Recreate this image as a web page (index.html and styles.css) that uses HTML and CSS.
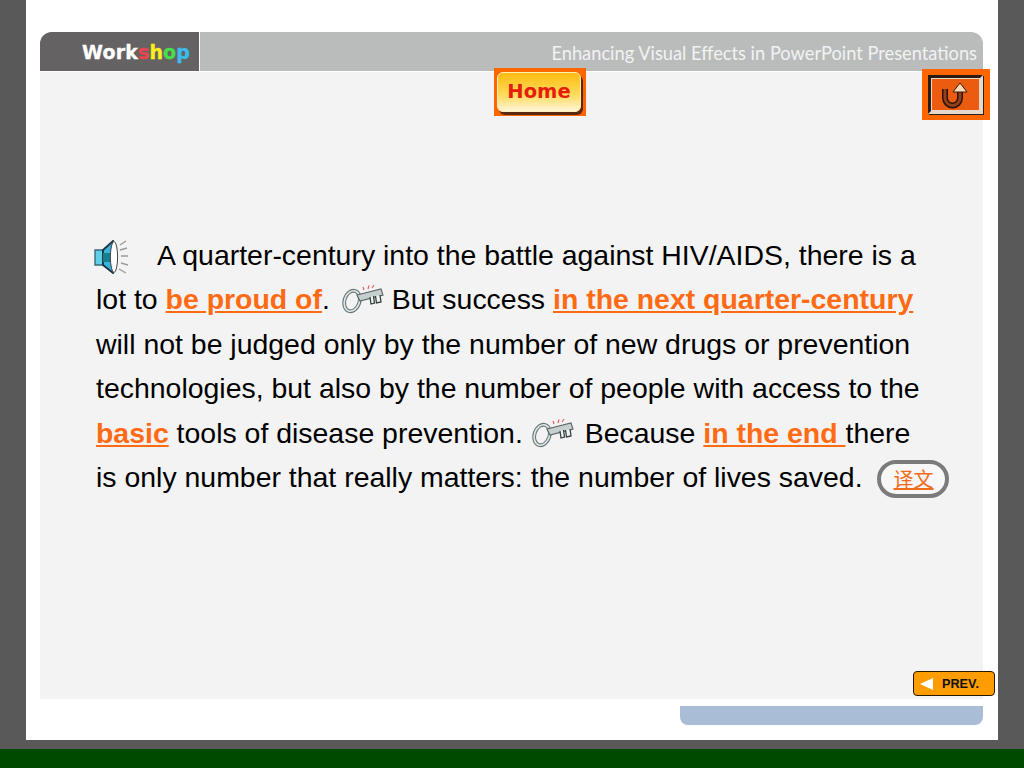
FILE: index.html
```html
<!DOCTYPE html>
<html lang="en">
<head>
<meta charset="utf-8">
<title>Workshop</title>
<link rel="stylesheet" href="styles.css">
</head>
<body>
<div class="slide">
  <header class="head">
    <div class="brand"><span class="brand-name">Work<span class="c-s">s</span><span class="c-h">h</span><span class="c-o">o</span><span class="c-p">p</span></span></div>
    <div class="title">Enhancing Visual Effects in PowerPoint Presentations</div>
  </header>
  <main class="content">
    <p class="para"><span class="first"><svg class="speaker" viewBox="0 0 34 34" width="34" height="34"><path d="M1 10h8v15H1z" fill="#62cfe6" stroke="#3a6a78" stroke-width="1.4"/><path d="M9 10 L19 1 V33 L9 25z" fill="#39b4de" stroke="#1c3440" stroke-width="1.8"/><path d="M9 13h7v9H9z" fill="#17808f"/><ellipse cx="20" cy="17" rx="3.6" ry="15.5" fill="#fff" stroke="#444" stroke-width="1"/><path d="M26 5 L32 1 M26 10 L33 8 M27 16 L34 16 M27 23 L34 25 M25 29 L32 33" stroke="#9a9a9a" stroke-width="1.4" fill="none"/></svg>A quarter-century into the battle against HIV/AIDS, there is a</span><br>
    lot to <a class="key" href="#">be proud of</a>.<svg class="keyicon keyicon-a" viewBox="0 0 42 32" width="42" height="32"><ellipse cx="10" cy="17" rx="7.5" ry="10.5" transform="rotate(18 10 17)" fill="none" stroke="#68767a" stroke-width="3.8"/><ellipse cx="10" cy="17" rx="7.5" ry="10.5" transform="rotate(18 10 17)" fill="none" stroke="#e3e9e9" stroke-width="1.6"/><path d="M15 11 L39 5 L41 11 L18 17z" fill="#c6cfcf" stroke="#5a6666" stroke-width="1.1"/><path d="M28 13l1 7 3.5-1-1-7M33.5 12l1 7 4.5-1-1-7" fill="#eef2f2" stroke="#37413f" stroke-width="1.3"/><path d="M22 6l-1-3M26 5l1-3.5M30 4l2-3" stroke="#e0606a" stroke-width="1.2"/></svg> But success <a class="key" href="#">in the next quarter-century</a><br>
    will not be judged only by the number of new drugs or prevention<br>
    technologies, but also by the number of people with access to the<br>
    <a class="key" href="#">basic</a> tools of disease prevention.<svg class="keyicon keyicon-b" viewBox="0 0 42 32" width="42" height="32"><ellipse cx="10" cy="17" rx="7.5" ry="10.5" transform="rotate(18 10 17)" fill="none" stroke="#68767a" stroke-width="3.8"/><ellipse cx="10" cy="17" rx="7.5" ry="10.5" transform="rotate(18 10 17)" fill="none" stroke="#e3e9e9" stroke-width="1.6"/><path d="M15 11 L39 5 L41 11 L18 17z" fill="#c6cfcf" stroke="#5a6666" stroke-width="1.1"/><path d="M28 13l1 7 3.5-1-1-7M33.5 12l1 7 4.5-1-1-7" fill="#eef2f2" stroke="#37413f" stroke-width="1.3"/><path d="M22 6l-1-3M26 5l1-3.5M30 4l2-3" stroke="#e0606a" stroke-width="1.2"/></svg> Because <a class="key" href="#">in the end </a>there<br>
    is only number that really matters: the number of lives saved. <a class="pill" href="#">译文</a></p>
  </main>
  <div class="foot"><div class="foot-bar"></div></div>
  <a class="home" href="#"><span class="home-face">Home</span></a>
  <a class="back" href="#"><span class="back-face"><svg viewBox="0 0 28 28" width="28" height="28"><path d="M5 8v9a7.5 7.5 0 0 0 15 0v-6" fill="none" stroke="#2a1208" stroke-width="6"/><path d="M5 8v9a7.5 7.5 0 0 0 15 0v-6" fill="none" stroke="#94401c" stroke-width="3"/><path d="M13 11l7-9 7 9z" fill="#ffdcbc" stroke="#3a1a0a" stroke-width="1"/></svg></span></a>
  <a class="prev" href="#"><span class="tri"></span>PREV.</a>
</div>
<div class="ground"></div>
</body>
</html>
```
FILE: styles.css
```css
* { box-sizing: border-box; }
html, body { margin: 0; height: 100%; }
body {
  background: #5a595a;
  display: flex;
  flex-direction: column;
  height: 768px;
  overflow: hidden;
  font-family: "Liberation Sans", Arial, sans-serif;
}
.slide {
  position: relative;
  width: 972px;
  height: 740px;
  margin-left: 26px;
  background: #fff;
  padding: 32px 15px 15px 14px;
  display: flex;
  flex-direction: column;
}
.ground {
  margin-top: 9px;
  flex: 1;
  background: #004a00;
}
.head {
  display: flex;
  height: 39px;
  border-radius: 12px 12px 0 0;
  overflow: hidden;
  background: #babcbc;
}
.brand {
  width: 159px;
  background: #646263;
  display: flex;
  align-items: center;
  padding-left: 42px;
}
.brand-name {
  font-family: "DejaVu Sans", sans-serif;
  font-weight: 700;
  font-size: 19px;
  letter-spacing: 0.15px;
  color: #fff;
  -webkit-text-stroke: 0.35px currentColor;
}
.c-s { color: #e8454f; }
.c-h { color: #ffee1e; }
.c-o { color: #48df48; }
.c-p { color: #3cbcec; }
.title {
  flex: 1;
  padding-right: 6px;
  border-left: 1px solid #fff;
  display: flex;
  align-items: center;
  justify-content: flex-end;
  padding-top: 3px;
  font-family: Lato, sans-serif;
  font-size: 18.27px;
  color: #f1f2f2;
}
.content {
  margin-top: 1px;
  height: 627px;
  background: #f3f3f3;
  padding: 161px 0 0 56px;
}
.para {
  margin: 0;
  font-size: 28.45px;
  line-height: 44.4px;
  color: #000;
  white-space: nowrap;
}
.first { display: inline-block; }
.speaker { vertical-align: -9px; margin-right: 29px; margin-left: -2px; }
.keyicon { vertical-align: -7px; }
.keyicon-a { margin-left: 12px; }
.keyicon-b { margin-left: 9px; margin-right: 3px; }
.key { color: #ff6a13; font-weight: 700; text-decoration: underline; }
.pill {
  display: inline-block;
  width: 72px;
  height: 38px;
  margin-left: 7px;
  border: 4px solid #7b7b7b;
  border-radius: 19px;
  background: #f7f7f7;
  color: #f26a1b;
  font-family: "Noto Sans CJK SC", sans-serif;
  font-size: 20px;
  line-height: 30px;
  text-align: center;
  vertical-align: 0;
  text-decoration: underline;
}
.foot {
  margin-top: 7px;
  display: flex;
  justify-content: flex-end;
}
.foot-bar {
  width: 303px;
  height: 19px;
  background: #a9bdd6;
  border-radius: 0 0 8px 8px;
}
.home {
  position: absolute;
  left: 468px;
  top: 68px;
  width: 92px;
  height: 48px;
  background: #ff6600;
  padding: 4px 5px 4px 3px;
  text-decoration: none;
}
.home-face {
  display: block;
  width: 84px;
  height: 40px;
  border-radius: 6px;
  background: linear-gradient(#ffbb12, #ffdc5c 58%, #fff4d8);
  border: 1px solid #ffeeb8;
  box-shadow: 2px 3px 0 #5a2a10;
  color: #e81c0c;
  font-family: "DejaVu Sans", sans-serif;
  font-weight: 700;
  font-size: 19.5px;
  line-height: 37px;
  text-align: center;
}
.back {
  position: absolute;
  left: 896px;
  top: 69px;
  width: 68px;
  height: 51px;
  background: #ff6600;
  padding: 6px 7px 6px 6px;
}
.back-face {
  display: flex;
  align-items: center;
  justify-content: center;
  width: 100%;
  height: 100%;
  padding-right: 4px;
  background: #ec5c10;
  border: 3px solid #e8d8cc;
  border-left-color: #2a1a12;
  border-top-color: #2a1a12;
  outline: 1px solid #e8d8cc;
  outline-offset: -4px;
  box-shadow: 1px 1px 0 #222;
}
.prev {
  position: absolute;
  left: 887px;
  top: 671px;
  width: 82px;
  height: 25px;
  background: #ff9c00;
  border: 1px solid #2a1a00;
  border-radius: 4px;
  display: flex;
  align-items: center;
  padding-left: 6px;
  color: #111;
  font-weight: 700;
  font-size: 12.7px;
  text-decoration: none;
}
.tri {
  width: 0;
  height: 0;
  border-style: solid;
  border-width: 6px 13px 6px 0;
  border-color: transparent #fff transparent transparent;
  margin-right: 9px;
}
```
